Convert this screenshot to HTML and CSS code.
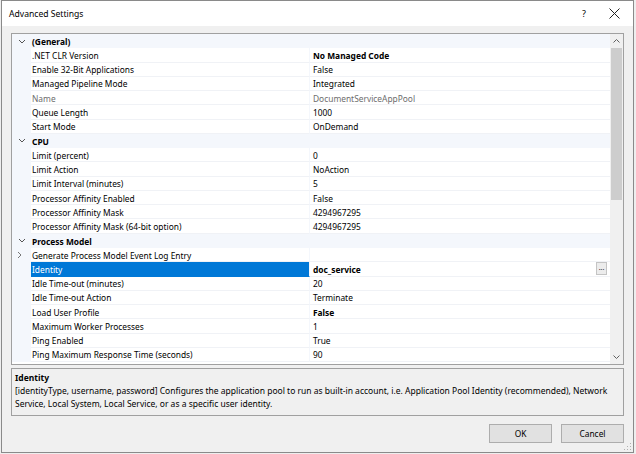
FILE: index.html
```html
<!DOCTYPE html>
<html>
<head>
<meta charset="utf-8">
<link rel="stylesheet" href="styles.css">
</head>
<body>
<div class="window">
  <div class="titlebar">
    <span class="title">Advanced Settings</span>
    <span class="help">?</span>
    <span class="close"><svg width="11" height="11" viewBox="0 0 11 11"><path d="M0.5 0.5 L10.5 10.5 M10.5 0.5 L0.5 10.5" stroke="#222" stroke-width="1" fill="none"/></svg></span>
  </div>
  <div class="content">
    <div class="grid">
      <div class="rows">
        <div class="row cat"><span class="gut"><svg class="chev" width="8" height="5" viewBox="0 0 8 5"><path d="M1 1 L4 4 L7 1" stroke="#555" fill="none"/></svg></span><span class="catname">(General)</span></div>
        <div class="row"><span class="gut"></span><span class="lab">.NET CLR Version</span><span class="val b">No Managed Code</span></div>
        <div class="row"><span class="gut"></span><span class="lab">Enable 32-Bit Applications</span><span class="val">False</span></div>
        <div class="row"><span class="gut"></span><span class="lab">Managed Pipeline Mode</span><span class="val">Integrated</span></div>
        <div class="row ro"><span class="gut"></span><span class="lab">Name</span><span class="val">DocumentServiceAppPool</span></div>
        <div class="row"><span class="gut"></span><span class="lab">Queue Length</span><span class="val">1000</span></div>
        <div class="row"><span class="gut"></span><span class="lab">Start Mode</span><span class="val">OnDemand</span></div>
        <div class="row cat"><span class="gut"><svg class="chev" width="8" height="5" viewBox="0 0 8 5"><path d="M1 1 L4 4 L7 1" stroke="#555" fill="none"/></svg></span><span class="catname">CPU</span></div>
        <div class="row"><span class="gut"></span><span class="lab">Limit (percent)</span><span class="val">0</span></div>
        <div class="row"><span class="gut"></span><span class="lab">Limit Action</span><span class="val">NoAction</span></div>
        <div class="row"><span class="gut"></span><span class="lab">Limit Interval (minutes)</span><span class="val">5</span></div>
        <div class="row"><span class="gut"></span><span class="lab">Processor Affinity Enabled</span><span class="val">False</span></div>
        <div class="row"><span class="gut"></span><span class="lab">Processor Affinity Mask</span><span class="val">4294967295</span></div>
        <div class="row"><span class="gut"></span><span class="lab">Processor Affinity Mask (64-bit option)</span><span class="val">4294967295</span></div>
        <div class="row cat"><span class="gut"><svg class="chev" width="8" height="5" viewBox="0 0 8 5"><path d="M1 1 L4 4 L7 1" stroke="#555" fill="none"/></svg></span><span class="catname">Process Model</span></div>
        <div class="row"><span class="gut"><svg class="chevr" width="5" height="8" viewBox="0 0 5 8"><path d="M1 1 L4 4 L1 7" stroke="#777" fill="none"/></svg></span><span class="lab">Generate Process Model Event Log Entry</span><span class="val"></span></div>
        <div class="row sel"><span class="gut"></span><span class="lab">Identity</span><span class="val b">doc_service<span class="dots">...</span></span></div>
        <div class="row"><span class="gut"></span><span class="lab">Idle Time-out (minutes)</span><span class="val">20</span></div>
        <div class="row"><span class="gut"></span><span class="lab">Idle Time-out Action</span><span class="val">Terminate</span></div>
        <div class="row"><span class="gut"></span><span class="lab">Load User Profile</span><span class="val b">False</span></div>
        <div class="row"><span class="gut"></span><span class="lab">Maximum Worker Processes</span><span class="val">1</span></div>
        <div class="row"><span class="gut"></span><span class="lab">Ping Enabled</span><span class="val">True</span></div>
        <div class="row"><span class="gut"></span><span class="lab">Ping Maximum Response Time (seconds)</span><span class="val">90</span></div>
      </div>
      <div class="scrollbar">
        <div class="sbtn"><svg width="7" height="4" viewBox="0 0 7 4"><path d="M0.5 3.5 L3.5 0.5 L6.5 3.5" stroke="#606060" fill="none"/></svg></div>
        <div class="track"><div class="thumb"></div></div>
        <div class="sbtn"><svg width="7" height="4" viewBox="0 0 7 4"><path d="M0.5 0.5 L3.5 3.5 L6.5 0.5" stroke="#606060" fill="none"/></svg></div>
      </div>
    </div>
    <div class="desc">
      <div class="desc-title">Identity</div>
      <div class="desc-text">[identityType, username, password] Configures the application pool to run as built-in account, i.e. Application Pool Identity (recommended), Network Service, Local System, Local Service, or as a specific user identity.</div>
    </div>
    <div class="buttons">
      <button class="btn">OK</button>
      <button class="btn">Cancel</button>
    </div>
  </div>
  <svg class="grip" width="8" height="8" viewBox="0 0 8 8">
    <rect x="6" y="0" width="1" height="1" fill="#b0b0b0"/>
    <rect x="3" y="3" width="1" height="1" fill="#b0b0b0"/><rect x="6" y="3" width="1" height="1" fill="#b0b0b0"/>
    <rect x="0" y="6" width="1" height="1" fill="#b0b0b0"/><rect x="3" y="6" width="1" height="1" fill="#b0b0b0"/><rect x="6" y="6" width="1" height="1" fill="#b0b0b0"/>
  </svg>
</div>
</body>
</html>
```

FILE: styles.css
```css
html, body {
  margin: 0;
  padding: 0;
}
body {
  width: 636px;
  height: 454px;
  background: #eeeeee;
  font-family: "Noto Sans", "Open Sans", sans-serif;
  font-size: 8.4px;
  color: #000;
  overflow: hidden;
}
.window {
  position: relative;
  margin-left: 1px;
  width: 631px;
  height: 451px;
  border: 1px solid #8a8a8a;
  background: #f0f0f0;
  display: flex;
  flex-direction: column;
}
.titlebar {
  height: 25px;
  flex: none;
  background: #fff;
  display: flex;
  align-items: center;
  padding-left: 7px;
}
.title {
  font-size: 8.6px;
  flex: 1;
}
.help {
  font-size: 9px;
  width: 10px;
  text-align: center;
  margin-right: 20px;
}
.close {
  width: 11px;
  height: 11px;
  margin-right: 13px;
  display: flex;
}
.content {
  flex: 1;
  display: flex;
  flex-direction: column;
  padding: 7px 9px 0 9px;
}
.grid {
  height: 330px;
  border: 1px solid #a0a0a0;
  background: #fff;
  display: flex;
  overflow: hidden;
}
.rows {
  width: 598px;
  display: flex;
  flex-direction: column;
  overflow: hidden;
}
.row {
  flex: none;
  height: 14.27px;
  display: grid;
  grid-template-columns: 19px 279px 300px;
  align-items: stretch;
}
.gut {
  background: #f4f7fc;
  display: flex;
  align-items: center;
  justify-content: center;
}
.chev {
  margin-left: 1px;
}
.chevr {
  margin-left: -5px;
}
.lab, .val {
  display: flex;
  align-items: center;
  white-space: nowrap;
  overflow: hidden;
  box-sizing: border-box;
  border-bottom: 1px solid #f0f2f6;
  padding-top: 1px;
}
.lab {
  padding-left: 1px;
  border-right: 1px solid #f4f7fc;
}
.val {
  padding-left: 3px;
  position: relative;
}
.b {
  font-weight: 700;
}
.ro .lab, .ro .val {
  color: #6d6d6d;
}
.sel .lab {
  background: #0078d7;
  color: #fff;
  border-bottom-color: #0078d7;
}
.cat {
  background: #f4f7fc;
}
.catname {
  grid-column: 2 / 4;
  font-weight: 700;
  display: flex;
  align-items: center;
  padding-left: 1px;
  padding-top: 1px;
}
.dots {
  position: absolute;
  right: 3px;
  top: 0;
  width: 11px;
  height: 13px;
  box-sizing: border-box;
  border: 1px solid #c4c4c4;
  background: #ececec;
  font-weight: 400;
  font-size: 7px;
  line-height: 9px;
  text-align: center;
  color: #333;
}
.scrollbar {
  width: 13px;
  background: #f0f0f0;
  display: flex;
  flex-direction: column;
}
.sbtn {
  height: 14px;
  flex: none;
  display: flex;
  align-items: center;
  justify-content: center;
}
.track {
  flex: 1;
}
.thumb {
  height: 152px;
  margin: 0 1px;
  background: #cdcdcd;
}
.desc {
  margin-top: 3px;
  height: 44px;
  border: 1px solid #a0a0a0;
  background: #f0f0f0;
  padding: 2px 3px 0 3px;
  line-height: 13px;
  font-size: 8.5px;
}
.desc-title {
  font-weight: 700;
}
.desc-text {
  padding-right: 6px;
}
.buttons {
  margin-top: 8px;
  display: flex;
  justify-content: flex-end;
  gap: 9px;
}
.btn {
  width: 63px;
  height: 19px;
  margin: 0;
  padding: 0;
  border: 1px solid #adadad;
  background: #e1e1e1;
  font-family: "Noto Sans", "Open Sans", sans-serif;
  font-size: 8.4px;
  color: #000;
}
.grip {
  position: absolute;
  right: 1px;
  bottom: 1px;
}
```
